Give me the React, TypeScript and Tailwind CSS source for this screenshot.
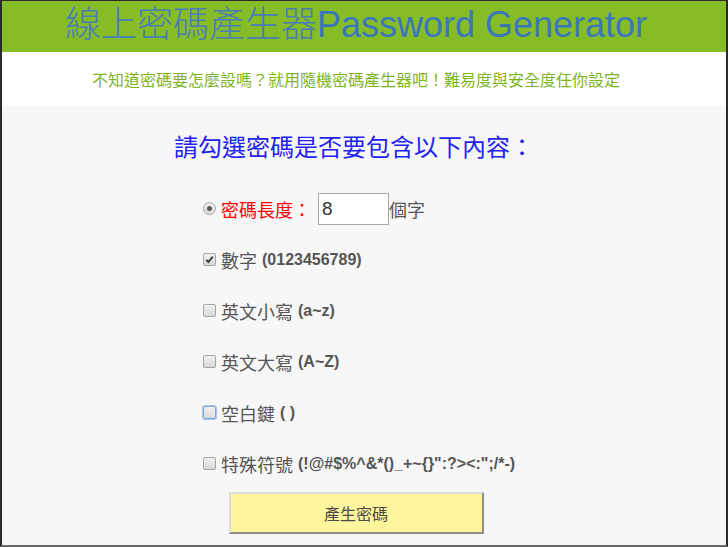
import React from 'react';

const cjk = 'font-["Noto_Sans_CJK_TC",sans-serif]';
const latin = 'font-["Liberation_Sans",Arial,sans-serif]';

const Checkbox = ({ checked, focused }: { checked?: boolean; focused?: boolean }) => (
  <span
    className={`relative inline-flex items-center justify-center w-[13px] h-[13px] rounded-[2px] border bg-gradient-to-b from-[#f1f1f1] to-[#d9d9d9] ${
      focused ? 'border-[#7ea6e0] shadow-[0_0_0_1px_#a9c4ec]' : 'border-[#a6a6a6]'
    }`}
  >
    {checked && (
      <svg width="9" height="9" viewBox="0 0 9 9">
        <path d="M1.2 4.8 L3.4 7 L7.8 1.6" fill="none" stroke="#3b3b3b" strokeWidth="1.9" />
      </svg>
    )}
  </span>
);

const Radio = () => (
  <span className="inline-flex items-center justify-center w-[13px] h-[13px] rounded-full border border-[#a6a6a6] bg-gradient-to-b from-[#f1f1f1] to-[#d9d9d9]">
    <span className="w-[5px] h-[5px] rounded-full bg-[#555]" />
  </span>
);

interface OptionRowProps {
  label: string;
  hint: string;
  checked?: boolean;
  focused?: boolean;
}

const OptionRow = ({ label, hint, checked, focused }: OptionRowProps) => (
  <div className="h-[51px] flex items-center">
    <Checkbox checked={checked} focused={focused} />
    <span className={`ml-[5px] text-[18px] leading-none text-[#555] ${cjk}`}>{label}</span>
    <span className={`ml-[5px] text-[16px] font-bold leading-none text-[#555] ${latin}`}>{hint}</span>
  </div>
);

export default function App() {
  return (
    <div className="w-[728px] h-[547px] box-border border-x-2 border-t border-b-2 border-x-[#2a2a2a] border-t-[#2a2a2a] border-b-[#666] bg-[#f7f7f7] flex flex-col overflow-hidden">
      {/* Header */}
      <div className="h-[51px] bg-[#86bc25] flex items-start justify-center pr-[16px]">
        <h1 className={`mt-[2px] text-[36px] leading-[42px] whitespace-nowrap ${latin}`}>
          <span className={`inline-block leading-[36px] font-[300] text-[#4a7cb6] ${cjk}`}>線上密碼產生器</span>
          <span className="text-[#3b76bb]">Password Generator</span>
        </h1>
      </div>

      {/* Tagline */}
      <div className="h-[54px] bg-white flex items-center justify-center pr-[16px]">
        <p className={`text-[16px] leading-none text-[#7cb51f] ${cjk}`}>
          不知道密碼要怎麼設嗎？就用隨機密碼產生器吧！難易度與安全度任你設定
        </p>
      </div>

      {/* Options */}
      <div className="flex-1 pr-[16px]">
        <h2 className={`mt-[22px] text-center text-[24px] leading-[36px] text-[#2222f2] pr-[4px] ${cjk}`}>
          請勾選密碼是否要包含以下內容：
        </h2>

        <div className="mt-[19px] pl-[201px]">
          <div className="h-[51px] flex items-center">
            <Radio />
            <span className={`ml-[5px] text-[18px] leading-none text-[#ff0000] ${cjk}`}>密碼長度：</span>
            <input
              defaultValue="8"
              className={`ml-[7px] w-[71px] h-[32px] box-border border border-[#a9a9a9] bg-white px-[3px] text-[19px] text-[#333] outline-none ${latin}`}
            />
            <span className={`text-[18px] leading-none text-[#555] ${cjk}`}>個字</span>
          </div>
          <OptionRow label="數字" hint="(0123456789)" checked />
          <OptionRow label="英文小寫" hint="(a~z)" />
          <OptionRow label="英文大寫" hint="(A~Z)" />
          <OptionRow label="空白鍵" hint="( )" focused />
          <OptionRow label="特殊符號" hint={'(!@#$%^&*()_+~{}":?><:";/*-)'} />
        </div>

        <div className="mt-[3px] flex justify-center">
          <button
            className={`w-[255px] h-[42px] box-border bg-[#fff59d] border-2 border-t-[#dcdcdc] border-l-[#dcdcdc] border-b-[#8c8c8c] border-r-[#8c8c8c] text-[16px] text-[#4a4a4a] ${cjk}`}
          >
            產生密碼
          </button>
        </div>
      </div>
    </div>
  );
}
